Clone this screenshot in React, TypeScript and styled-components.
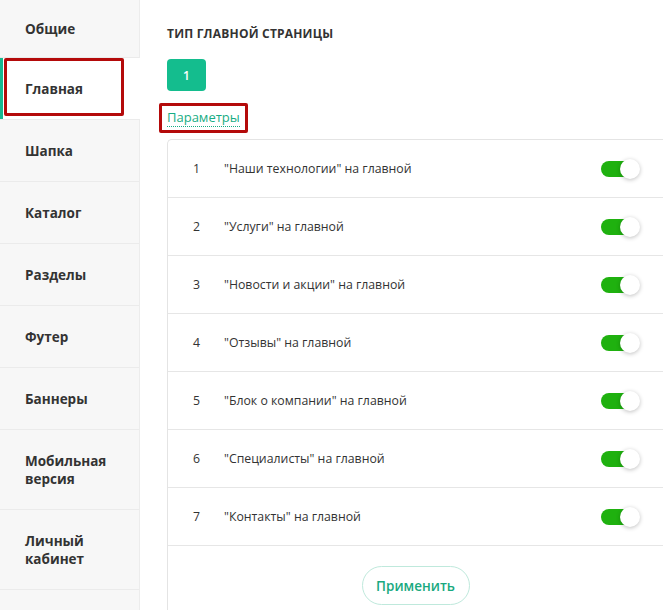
import React, { useState } from "react";
import styled, { createGlobalStyle } from "styled-components";

const GlobalStyle = createGlobalStyle`
  html, body {
    margin: 0;
    padding: 0;
    background: #fff;
    overflow: hidden;
  }
  body {
    font-family: "Open Sans", "Noto Sans", sans-serif;
    color: #333;
  }
`;

const Layout = styled.div`
  display: flex;
  width: 663px;
  height: 610px;
  overflow: hidden;
`;

const Sidebar = styled.nav`
  width: 139px;
  flex-shrink: 0;
  background: #f7f7f7;
  border-right: 1px solid #ececec;
  display: flex;
  flex-direction: column;
`;

const NavItem = styled.div<{ $active?: boolean; $tall?: boolean; $first?: boolean; $marked?: boolean }>`
  position: relative;
  height: ${(p) => (p.$tall ? 79 : p.$first ? 57 : 61)}px;
  flex-shrink: 0;
  display: flex;
  align-items: center;
  padding-left: 25px;
  font-size: 13.5px;
  font-weight: 700;
  line-height: 18px;
  white-space: pre-line;
  color: #333;
  border-bottom: 1px solid #ebebeb;
  background: ${(p) => (p.$active ? "#fff" : "transparent")};
  margin-right: ${(p) => (p.$active ? "-1px" : "0")};
  box-shadow: ${(p) => (p.$active ? "inset 3px 0 0 #17b890" : "none")};

  /* red frame around the highlighted item */
  &::after {
    content: "";
    display: ${(p) => (p.$marked ? "block" : "none")};
    position: absolute;
    left: 4px;
    top: 0;
    width: 120px;
    height: 58px;
    box-sizing: border-box;
    border: 3px solid #b40a0a;
    border-radius: 2px;
  }
`;

const Main = styled.main`
  flex: 1;
  display: flex;
  flex-direction: column;
  padding: 26px 0 0 27px;
  min-width: 0;
`;

const Heading = styled.h2`
  margin: 0;
  font-size: 12px;
  font-weight: 700;
  letter-spacing: 0.2px;
  color: #333;
  line-height: 16px;
`;

const TypeButton = styled.button`
  margin-top: 17px;
  width: 39px;
  height: 32px;
  border: none;
  border-radius: 4px;
  background: #14bd8e;
  color: #fff;
  font-family: inherit;
  font-size: 12px;
  font-weight: 600;
`;

const ParamsLink = styled.a`
  align-self: flex-start;
  margin: 12px 0 0 -8px;
  padding: 2px 5px 4px;
  font-size: 13px;
  line-height: 18px;
  color: #17ad84;
  text-decoration: none;
  border: 3px solid #b40a0a;
  border-radius: 2px;

  span {
    border-bottom: 1px dotted #17ad84;
  }
`;

const Card = styled.section`
  margin-top: 6px;
  margin-right: -6px;
  flex: 1;
  border: 1px solid #e4e4e4;
  border-right: none;
  border-bottom: none;
  border-radius: 5px 0 0 0;
`;

const Row = styled.div`
  height: 57px;
  display: flex;
  align-items: center;
  border-bottom: 1px solid #e6e6e6;
  padding-left: 25px;
  font-size: 12.3px;
  color: #333;
`;

const Num = styled.span`
  width: 31px;
  flex-shrink: 0;
`;

const Label = styled.span`
  flex: 1;
`;

const Track = styled.button<{ $on: boolean }>`
  position: relative;
  margin-right: 33px;
  width: 35px;
  height: 16px;
  padding: 0;
  border: none;
  border-radius: 8px;
  background: ${(p) => (p.$on ? "#1fb10f" : "#ccc")};
  cursor: pointer;
`;

const Knob = styled.span<{ $on: boolean }>`
  position: absolute;
  top: -2px;
  left: ${(p) => (p.$on ? "19px" : "-4px")};
  width: 20px;
  height: 20px;
  border-radius: 50%;
  background: #fff;
  box-shadow: 0 1px 4px rgba(0, 0, 0, 0.25);
`;

const Footer = styled.div`
  display: flex;
  justify-content: center;
  padding: 20px 6px 0 0;
`;

const ApplyButton = styled.button`
  width: 108px;
  height: 39px;
  border: 1px solid #bfe9dc;
  border-radius: 20px;
  background: #fff;
  color: #19a97f;
  font-family: inherit;
  font-size: 13.5px;
  font-weight: 600;
`;

const nav = [
  { title: "Общие", first: true },
  { title: "Главная", active: true },
  { title: "Шапка" },
  { title: "Каталог" },
  { title: "Разделы" },
  { title: "Футер" },
  { title: "Баннеры" },
  { title: "Мобильная\nверсия", tall: true },
  { title: "Личный\nкабинет", tall: true },
  { title: "" },
];

const blocks = [
  "\"Наши технологии\" на главной",
  "\"Услуги\" на главной",
  "\"Новости и акции\" на главной",
  "\"Отзывы\" на главной",
  "\"Блок о компании\" на главной",
  "\"Специалисты\" на главной",
  "\"Контакты\" на главной",
];

export default function App() {
  const [enabled, setEnabled] = useState<boolean[]>(blocks.map(() => true));

  const toggle = (i: number) =>
    setEnabled((prev) => prev.map((v, j) => (j === i ? !v : v)));

  return (
    <>
      <GlobalStyle />
      <Layout>
        <Sidebar>
          {nav.map((item, i) => (
            <NavItem
              key={i}
              $first={item.first}
              $active={item.active}
              $marked={item.active}
              $tall={item.tall}
            >
              {item.title}
            </NavItem>
          ))}
        </Sidebar>
        <Main>
          <Heading>ТИП ГЛАВНОЙ СТРАНИЦЫ</Heading>
          <TypeButton>1</TypeButton>
          <ParamsLink href="#">
            <span>Параметры</span>
          </ParamsLink>
          <Card>
            {blocks.map((label, i) => (
              <Row key={i}>
                <Num>{i + 1}</Num>
                <Label>{label}</Label>
                <Track $on={enabled[i]} onClick={() => toggle(i)}>
                  <Knob $on={enabled[i]} />
                </Track>
              </Row>
            ))}
            <Footer>
              <ApplyButton>Применить</ApplyButton>
            </Footer>
          </Card>
        </Main>
      </Layout>
    </>
  );
}
